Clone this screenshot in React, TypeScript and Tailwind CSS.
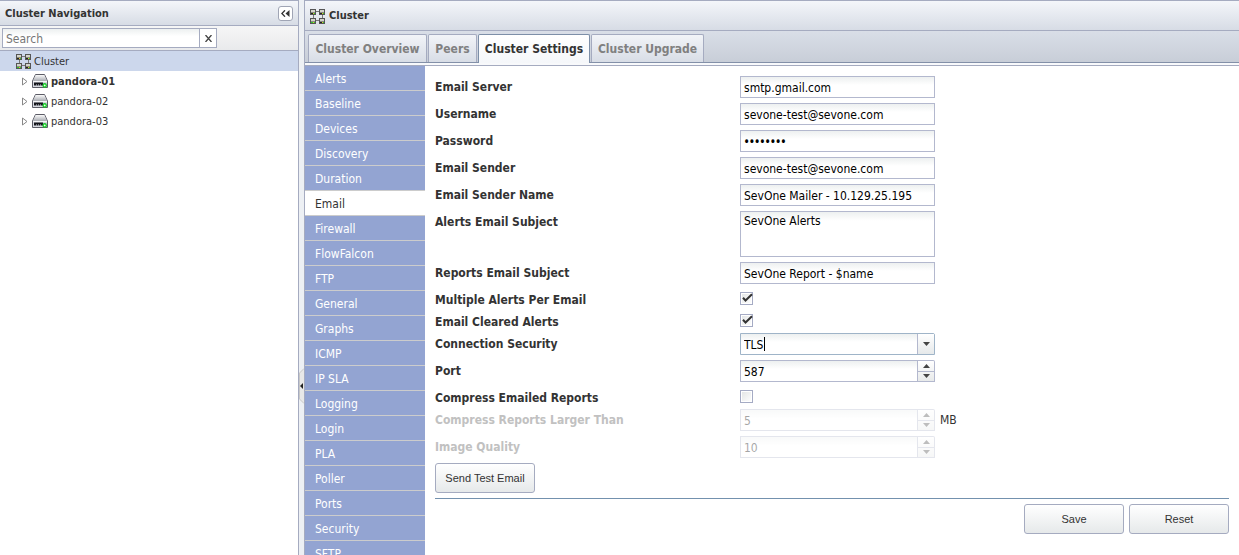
import { useState } from "react";
import type { ReactNode } from "react";

const settings = [
  "Alerts", "Baseline", "Devices", "Discovery", "Duration", "Email", "Firewall",
  "FlowFalcon", "FTP", "General", "Graphs", "ICMP", "IP SLA", "Logging", "Login",
  "PLA", "Poller", "Ports", "Security", "SFTP", "SNMP", "SSH",
];

const tabs = [
  { name: "Cluster Overview", width: "w-[119px]" },
  { name: "Peers", width: "w-[49px]" },
  { name: "Cluster Settings", width: "w-[112px]" },
  { name: "Cluster Upgrade", width: "w-[113px]" },
];

const fieldStyle =
  "block h-[22px] w-full border border-[#b3b8ce] bg-linear-to-b from-[#edf0f0] to-white to-40% px-[3px] text-black outline-none";

function ClusterIcon() {
  return (
    <svg width="16" height="16" viewBox="0 0 16 16" shapeRendering="crispEdges" aria-hidden="true">
      <path d="M6 3.5h3M6 12.5h3M3.5 7v3M12.5 7v3" stroke="#777" fill="none" />
      {[[0, 1], [9, 1], [0, 10], [9, 10]].map(([x, y]) => (
        <g key={`${x}-${y}`} transform={`translate(${x} ${y})`}>
          <rect x="0" y="0" width="6" height="6" fill="#555" />
          <rect x="1" y="1" width="4" height="2" fill="#d4d4cc" />
          <rect x="1" y="3" width="4" height="1" fill="#8a8a82" />
          <rect x="1" y="4" width="2" height="1" fill={y > 5 && x < 5 ? "#2fc832" : "#222"} />
          <rect x="3" y="4" width="1" height="1" fill="#e0c52a" />
          <rect x="4" y="4" width="1" height="1" fill="#2fc832" />
        </g>
      ))}
    </svg>
  );
}

function ServerIcon() {
  return (
    <svg width="16" height="16" viewBox="0 0 16 16" aria-hidden="true">
      <defs>
        <linearGradient id="case" x1="0" y1="0" x2="0" y2="1">
          <stop offset="0" stopColor="#fafafa" />
          <stop offset="1" stopColor="#a8abb2" />
        </linearGradient>
      </defs>
      <path d="M3.5 1.5h9L15.5 8v6.5H.5V8z" fill="#d6d9e0" stroke="#5c5c66" strokeLinejoin="round" />
      <path d="M3.8 2h8.4L15 8H1z" fill="url(#case)" />
      <path d="M1 8.5h14" stroke="#f4f4f6" />
      <path d="M2 9.5h9v3H2z" fill="#15151c" />
      <path d="M4.5 11.5v1M6.5 11.5v1M8.5 11.5v1" stroke="#d6d9e0" />
      <circle cx="12.7" cy="12.4" r="1.6" fill="#e8ffe8" stroke="#16c927" strokeWidth="1.4" />
    </svg>
  );
}

function Row({ label, id, disabled, children }: { label: string; id: string; disabled?: boolean; children: ReactNode }) {
  return (
    <div className="flex items-start">
      <label
        htmlFor={id}
        className={`w-[305px] shrink-0 font-bold leading-[22px] ${disabled ? "text-[#c1c1c1]" : "text-[#333]"}`}
      >
        {label}
      </label>
      {children}
    </div>
  );
}

function TextRow({ label, id, value, type = "text" }: { label: string; id: string; value: string; type?: string }) {
  return (
    <Row label={label} id={id}>
      <div className="w-[195px]">
        <input
          id={id}
          type={type}
          defaultValue={value}
          className={`${fieldStyle} ${type === "password" ? "font-['Noto_Sans',sans-serif] text-[14px]" : "pt-[2px]"}`}
        />
      </div>
    </Row>
  );
}

function CheckRow({ label, id, checked }: { label: string; id: string; checked?: boolean }) {
  const [on, setOn] = useState(!!checked);
  return (
    <Row label={label} id={id}>
      <span className="mt-[3px] grid h-[14px] w-[13px]">
        <input
          id={id}
          type="checkbox"
          checked={on}
          onChange={() => setOn(!on)}
          className="col-start-1 row-start-1 size-[13px] appearance-none border border-[#a5abc4] bg-linear-to-br from-[#e2e4e4] to-white shadow-[inset_0_0_0_1px_white]"
        />
        {on && (
          <svg className="pointer-events-none col-start-1 row-start-1 size-[13px]" viewBox="0 0 13 13" aria-hidden="true">
            <path d="M3 5.8 5.5 8.5 12 2.2" fill="none" stroke="#333" strokeWidth="2" />
          </svg>
        )}
      </span>
    </Row>
  );
}

function Arrow({ up }: { up?: boolean }) {
  return (
    <svg width="7" height="4" viewBox="0 0 7 4" aria-hidden="true">
      <path d={up ? "M0 4 3.5 0 7 4z" : "M0 0 3.5 4 7 0z"} fill="#444" />
    </svg>
  );
}

function SpinRow({ label, id, value, disabled, unit }: { label: string; id: string; value: number; disabled?: boolean; unit?: string }) {
  const [n, setN] = useState(value);
  return (
    <Row label={label} id={id} disabled={disabled}>
      <div className={`flex h-[22px] w-[195px] ${disabled ? "opacity-35" : ""}`}>
        <div className="min-w-0 flex-1">
          <input
            id={id}
            type="number"
            value={n}
            disabled={disabled}
            onChange={(e) => setN(Number(e.target.value))}
            className={`${fieldStyle} pt-[2px] [appearance:textfield] [&::-webkit-inner-spin-button]:appearance-none`}
          />
        </div>
        <div className="flex w-[17px] flex-col rounded-tr-[2px] border border-l-0 border-[#b3b8ce] bg-linear-to-b from-white to-[#e8eaea]">
          <button type="button" aria-label={`Increase ${label}`} disabled={disabled} onClick={() => setN(n + 1)} className="flex flex-1 items-center justify-center border-b border-[#b3b8ce]">
            <Arrow up />
          </button>
          <button type="button" aria-label={`Decrease ${label}`} disabled={disabled} onClick={() => setN(n - 1)} className="flex flex-1 items-center justify-center">
            <Arrow />
          </button>
        </div>
      </div>
      {unit && <span className="ml-[5px] leading-[22px] text-[#333]">{unit}</span>}
    </Row>
  );
}

function PushButton({ children }: { children: string }) {
  return (
    <button type="button" className="h-[30px] w-[100px] rounded-[3px] border border-[#a5abc0] bg-linear-to-b from-white to-[#e6e9ea] font-['Liberation_Sans',Arial,sans-serif] text-[11px] text-[#333]">
      {children}
    </button>
  );
}

function Navigation() {
  return (
    <aside className="flex w-[299px] shrink-0 flex-col border-t border-r border-[#a5abc0] bg-white">
      <header className="flex h-[25px] shrink-0 items-center justify-between border-b border-[#a5abc0] bg-linear-to-b from-[#f4f6fa] to-[#d7dce5] px-[5px]">
        <h2 className="pt-[2px] text-[11px] font-bold text-[#333]">Cluster Navigation</h2>
        <button type="button" aria-label="Collapse" className="flex size-[15px] items-center justify-center rounded-[3px] border border-[#a0a5b5] bg-white">
          <svg width="9" height="7" viewBox="0 0 9 7" aria-hidden="true">
            <path d="M4 .3.9 3.5 4 6.7" fill="none" stroke="#333" strokeWidth="1.3" />
            <path d="M8.5 0v7L4.5 3.5z" fill="#333" />
          </svg>
        </button>
      </header>
      <div className="flex h-[25px] shrink-0 items-center border-b border-[#a5abc0] bg-linear-to-b from-[#f6f6f6] to-[#e9eaec] pl-[2px]">
        <input type="text" aria-label="Search" placeholder="Search" className="h-[20px] w-[198px] border border-[#a5abc0] bg-linear-to-b from-[#edf0f0] to-white to-40% px-[3px] pt-[2px] outline-none placeholder:text-[#777]" />
        <button type="button" aria-label="Clear search" className="flex h-[20px] w-[17px] items-center justify-center border border-l-0 border-[#a5abc0] bg-white">
          <svg width="7" height="7" viewBox="0 0 7 7" aria-hidden="true">
            <path d="M.5 0 6.5 7M6.5 0 .5 7" stroke="#444" strokeWidth="1.3" />
          </svg>
        </button>
      </div>
      <ul className="text-[11px] text-[#333]">
        <li className="flex h-[20px] items-center gap-[2px] bg-[#ccd7ec] pl-[16px]">
          <ClusterIcon />
          <span className="pt-[2px]">Cluster</span>
        </li>
        {["pandora-01", "pandora-02", "pandora-03"].map((host, i) => (
          <li key={host} className="flex h-[20px] items-center pl-[22px]">
            <svg width="6" height="9" viewBox="0 0 6 9" aria-hidden="true">
              <path d="M.5 1v7L5 4.5z" fill="white" stroke="#888" />
            </svg>
            <span className="mr-[3px] ml-[4px]">
              <ServerIcon />
            </span>
            <span className={`pt-[2px] ${i === 0 ? "font-bold" : ""}`}>{host}</span>
          </li>
        ))}
      </ul>
    </aside>
  );
}

export default function App() {
  return (
    <div className="flex h-screen overflow-hidden bg-white font-['DejaVu_Sans_Condensed','DejaVu_Sans',sans-serif] text-[12px]">
      <Navigation />
      <div className="flex w-[5px] shrink-0 items-center bg-[#edf0f4]">
        <button type="button" aria-label="Collapse navigation" className="mt-[217px]">
          <svg width="5" height="36" viewBox="0 0 5 36" aria-hidden="true">
            <path d="M5 .5 .5 5v26L5 35.5" fill="#e8e8e8" stroke="#c8c8c8" />
            <path d="M4 15v6L1 18z" fill="#222" />
          </svg>
        </button>
      </div>
      <main className="flex min-w-0 flex-1 flex-col border-t border-l border-[#a5abc0]">
        <header className="flex h-[30px] shrink-0 items-center gap-[3px] border-b border-[#a5abc0] bg-linear-to-b from-[#f4f6fa] to-[#d7dce5] pl-[5px]">
          <ClusterIcon />
          <h1 className="pt-[2px] text-[11px] font-bold text-[#333]">Cluster</h1>
        </header>
        <nav aria-label="Cluster" className="flex h-[32px] shrink-0 items-end border-b border-[#8390a8] bg-linear-to-b from-[#d9dee7] to-[#c8ced8] pl-[3px] font-bold">
          {tabs.map((tab) => (
            <a
              key={tab.name}
              href={`#${tab.name.toLowerCase().replace(" ", "-")}`}
              className={`mr-px flex items-center justify-center whitespace-nowrap rounded-t-[2px] border border-b-0 ${tab.width} ${
                tab.name === "Cluster Settings"
                  ? "-mb-px h-[29px] border-[#7d8fa8] bg-linear-to-b from-white to-[#f5f7fa] text-[#333]"
                  : "h-[28px] border-[#a5abc0] bg-linear-to-b from-[#f2f4f8] to-[#d8dde6] text-[#808080]"
              }`}
            >
              {tab.name}
            </a>
          ))}
        </nav>
        <div className="h-[3px] shrink-0 border-b border-[#a5abc0] bg-[#f8f9fb]" />
        <div className="flex min-h-0 flex-1">
          <nav aria-label="Settings" className="w-[120px] shrink-0 overflow-hidden">
            {settings.map((name) => (
              <a
                key={name}
                href={`#${name.toLowerCase().replace(" ", "-")}`}
                className={`block h-[25px] border-b border-[#ccc] pl-[10px] leading-[26px] ${name === "Email" ? "bg-white text-[#333]" : "bg-[#93a4d2] text-white"}`}
              >
                {name}
              </a>
            ))}
          </nav>
          <form className="min-w-0 flex-1 px-[10px] pt-[10px]" onSubmit={(e) => e.preventDefault()}>
            <div className="flex flex-col gap-[5px]">
              <TextRow label="Email Server" id="server" value="smtp.gmail.com" />
              <TextRow label="Username" id="username" value="sevone-test@sevone.com" />
              <TextRow label="Password" id="password" value="password" type="password" />
              <TextRow label="Email Sender" id="sender" value="sevone-test@sevone.com" />
              <TextRow label="Email Sender Name" id="sender-name" value="SevOne Mailer - 10.129.25.195" />
              <Row label="Alerts Email Subject" id="alerts-subject">
                <textarea
                  id="alerts-subject"
                  defaultValue="SevOne Alerts"
                  className="block h-[46px] w-[195px] resize-none border border-[#b3b8ce] bg-linear-to-b from-[#edf0f0] to-white to-20% px-[3px] leading-[18px] text-black outline-none"
                />
              </Row>
              <TextRow label="Reports Email Subject" id="reports-subject" value="SevOne Report - $name" />
              <div className="h-[17px]"><CheckRow label="Multiple Alerts Per Email" id="multiple" checked /></div>
              <div className="h-[17px]"><CheckRow label="Email Cleared Alerts" id="cleared" checked /></div>
              <Row label="Connection Security" id="security">
                <div className="relative h-[22px] w-[195px]">
                  <select id="security" defaultValue="TLS" className="h-[22px] w-full appearance-none rounded-tr-[2px] border border-[#9fb4c8] bg-linear-to-b from-[#edf0f0] to-white to-40% px-[3px] pt-[2px] text-black outline-none">
                    <option>None</option>
                    <option>SSL</option>
                    <option>TLS</option>
                  </select>
                  <span className="pointer-events-none absolute top-[4px] left-[24px] h-[14px] w-px bg-black" />
                  <span className="pointer-events-none absolute top-px right-px bottom-px flex w-[17px] items-center justify-center border-l border-[#b3b8ce] bg-linear-to-b from-white to-[#e6e9ea]">
                    <Arrow />
                  </span>
                </div>
              </Row>
              <SpinRow label="Port" id="port" value={587} />
              <div className="h-[17px]"><CheckRow label="Compress Emailed Reports" id="compress" /></div>
              <SpinRow label="Compress Reports Larger Than" id="larger-than" value={5} unit="MB" disabled />
              <SpinRow label="Image Quality" id="quality" value={10} disabled />
            </div>
            <div className="mt-[5px] border-b border-[#7391ae] pb-[5px]">
              <PushButton>Send Test Email</PushButton>
            </div>
            <div className="mt-[5px] flex justify-end gap-[5px]">
              <PushButton>Save</PushButton>
              <PushButton>Reset</PushButton>
            </div>
          </form>
        </div>
      </main>
    </div>
  );
}
